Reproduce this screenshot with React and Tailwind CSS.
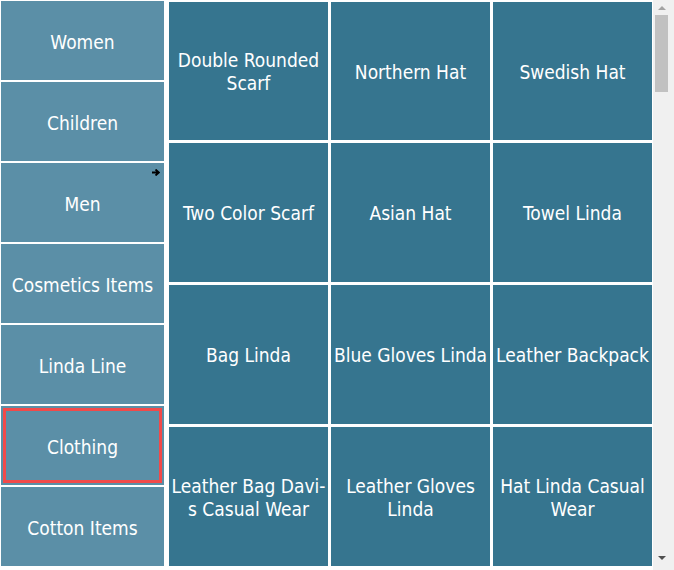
import React from "react";

const cats = ["Women", "Children", "Men", "Cosmetics Items", "Linda Line", "Clothing", "Cotton Items"];
const items = [
  ["Double Rounded", "Scarf"],
  ["Northern Hat"],
  ["Swedish Hat"],
  ["Two Color Scarf"],
  ["Asian Hat"],
  ["Towel Linda"],
  ["Bag Linda"],
  ["Blue Gloves Linda"],
  ["Leather Backpack"],
  ["Leather Bag Davi-", "s Casual Wear"],
  ["Leather Gloves", "Linda"],
  ["Hat Linda Casual", "Wear"],
];

const font = { fontFamily: '"DejaVu Sans Condensed", "DejaVu Sans", Tahoma, sans-serif' };

export default function App() {
  return (
    <div className="flex h-[570px] w-[674px] overflow-hidden bg-white" style={font}>
      <div className="ml-[1px] mt-[1px] flex w-[163px] flex-col gap-[2px]">
        {cats.map((c) => (
          <div
            key={c}
            className={
              "relative flex h-[79px] shrink-0 items-center justify-center bg-[#5b8fa7] pt-[4px] text-[19px] leading-[23px] text-white " +
              (c === "Clothing" ? "outline-[3px] outline-solid outline-[#f24a4a] outline-offset-[-5px]" : "")
            }
          >
            {c}
            {c === "Men" && (
              <svg className="absolute right-[4px] top-[6px]" width="8" height="7" viewBox="0 0 8 7">
                <path d="M0 3.5H6.5M3.5 0.5L6.8 3.5L3.5 6.5" stroke="#000" strokeWidth="1.8" fill="none" />
              </svg>
            )}
          </div>
        ))}
      </div>
      <div className="ml-[5px] mt-[2px] grid w-[483px] grid-cols-3 grid-rows-[138px_139px_139px_139px] gap-[3px] self-start">
        {items.map((lines, i) => (
          <div
            key={i}
            className="flex flex-col items-center justify-center bg-[#36758f] px-1 pt-[2px] text-center text-[19px] leading-[23px] text-white"
          >
            {lines.map((l) => (
              <span key={l} className="whitespace-nowrap">{l}</span>
            ))}
          </div>
        ))}
      </div>
      <div className="ml-[1px] flex h-[570px] w-[21px] flex-col bg-[#f0f0f0]">
        <div className="ml-[2px] flex h-[15px] w-[13px] items-center justify-center">
          <svg width="8" height="4" viewBox="0 0 8 4">
            <path d="M0 4L4 0L8 4Z" fill="#a3a3a3" />
          </svg>
        </div>
        <div className="ml-[2px] h-[77px] w-[13px] bg-[#c1c1c1]" />
        <div className="flex-1" />
        <div className="ml-[2px] flex h-[17px] w-[13px] items-start justify-center pt-[3px]">
          <svg width="8" height="4" viewBox="0 0 8 4">
            <path d="M0 0L8 0L4 4Z" fill="#505050" />
          </svg>
        </div>
      </div>
    </div>
  );
}
